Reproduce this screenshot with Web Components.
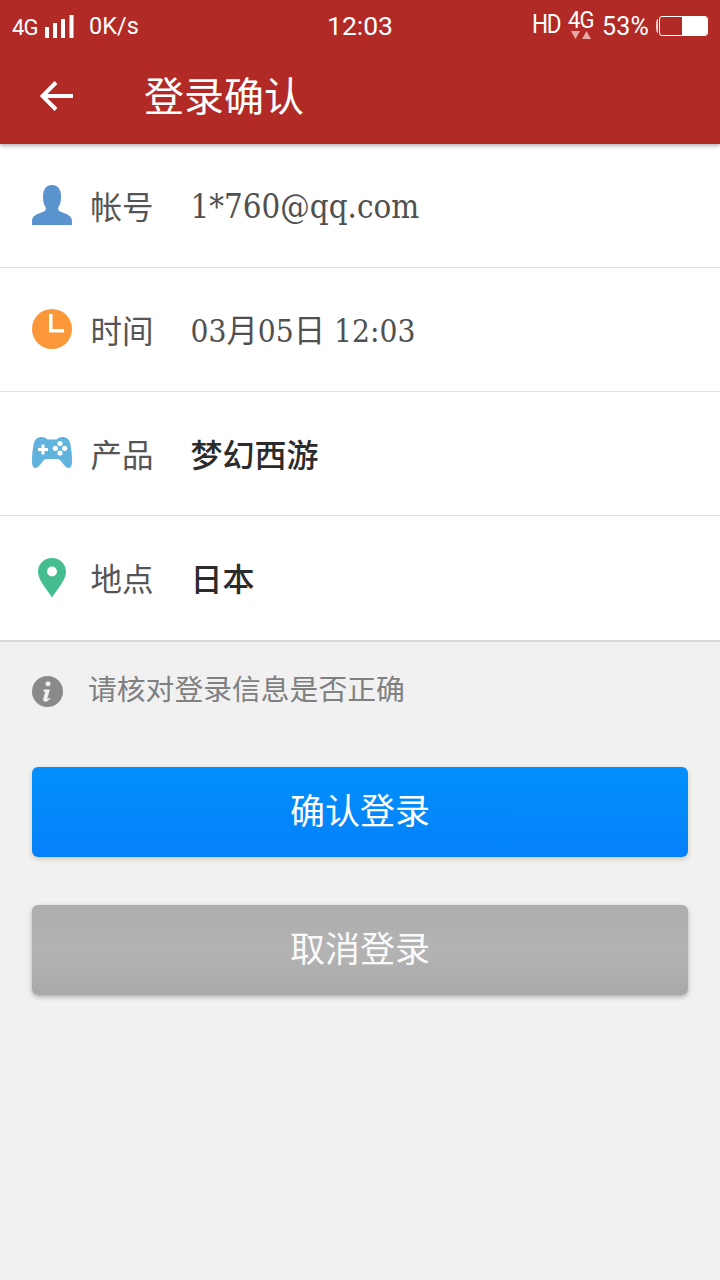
<!DOCTYPE html>
<html lang="zh"><head><meta charset="utf-8">
<style>
html,body{margin:0;padding:0;width:720px;height:1280px;overflow:hidden;background:#f1f1f1}
body{font-family:"Noto Sans CJK SC","Roboto",sans-serif}
login-app{height:1280px}
</style></head><body>
<login-app>
  <status-bar></status-bar>
  <app-bar title="登录确认"></app-bar>
  <info-list>
    <info-row label="帐号" kind="serif" size="32.8" value="1*760@qq.com">
      <svg slot="icon" width="40" height="40" viewBox="0 0 40 40"><path fill="#5b93cf" d="M0 40v-3.500C0 31.500 3.500 29.500 7.500 28.200 11 27 13.500 26 13.800 24.200 14 23 13.500 22 12.800 20.800 11.500 18.500 11 15.500 11 11.500 11 4.500 14 0 20 0s9 4.500 9 11.500c0 4-.5 7-1.800 9.300-.7 1.200-1.200 2.200-1 3.400.3 1.800 2.800 2.800 6.300 4 4 1.300 7.500 3.300 7.500 8.300V40z"/></svg>
    </info-row>
    <info-row label="时间" kind="serif" size="31.4" value="03月05日 12:03">
      <svg slot="icon" width="40" height="40" viewBox="0 0 40 40"><circle cx="20" cy="20" r="20" fill="#f99739"/><path d="M17 5h3.500v15H32v3.500H17z" fill="#fff"/></svg>
    </info-row>
    <info-row label="产品" kind="bold" value="梦幻西游">
      <svg slot="icon" width="40" height="32" viewBox="0 0 40 32"><path fill="#5fb3dc" d="M10 0C5.500 0 2.800 2 1.800 6.500.6 12 0 18 0 24c0 4 1 7 3 7 3 0 5.500-3.500 8-7 1-1.300 2-2 3.500-2h11c1.500 0 2.500.7 3.500 2 2.500 3.500 5 7 8 7 2 0 3-3 3-7 0-6-.6-12-1.800-17.500C37.200 2 34.500 0 30 0c-2.500 0-4 1-5.500 2.500h-9C14 1 12.500 0 10 0z"/><path fill="#fff" d="M9.500 7.500h3v3.500H16v3h-3.500v3.500h-3V14H6v-3h3.500z"/><circle cx="28" cy="6.500" r="2.600" fill="#fff"/><circle cx="28" cy="16" r="2.600" fill="#fff"/><circle cx="23.300" cy="11.300" r="2.600" fill="#fff"/><circle cx="32.700" cy="11.300" r="2.600" fill="#fff"/></svg>
    </info-row>
    <info-row label="地点" kind="bold" value="日本" last>
      <svg slot="icon" width="28" height="40" viewBox="0 0 28 40"><path fill-rule="evenodd" fill="#45bd8f" d="M14 0C6.200 0 0 6 0 13.800 0 22 8.500 31 14 39.500 19.500 31 28 22 28 13.800 28 6 21.800 0 14 0zm0 8.500a5 5 0 1 1 0 10 5 5 0 0 1 0-10z"/></svg>
    </info-row>
  </info-list>
  <hint-line text="请核对登录信息是否正确"></hint-line>
  <action-button tone="blue" label="确认登录"></action-button>
  <action-button tone="gray" label="取消登录"></action-button>
</login-app>
<script>
function def(name, html){
  customElements.define(name, class extends HTMLElement{
    connectedCallback(){
      if(this.shadowRoot) return;
      const r=this.attachShadow({mode:'open'});
      r.innerHTML=typeof html==='function'?html(this):html;
    }
  });
}
def('login-app',`<style>:host{display:flex;flex-direction:column;width:720px;background:#f1f1f1}</style><slot></slot>`);
def('status-bar',`<style>
:host{display:flex;align-items:center;height:52px;background:#b22a26;color:#fff;font-family:"Roboto",sans-serif;position:relative;box-sizing:border-box;padding:0 12px}
.l{display:flex;align-items:center;width:300px;height:52px}
.net{font-size:22px;letter-spacing:-.8px;margin-top:3px;width:33px;white-space:nowrap}
.speed{font-size:23.500px;margin-left:15px;margin-top:-1px;white-space:nowrap}
.time{position:absolute;left:0;right:0;top:9px;text-align:center;font-size:26.500px;line-height:34px}
.r{display:flex;align-items:center;margin-left:auto;height:52px}
.hd{font-size:25px;letter-spacing:-1.500px;line-height:30px;margin-top:-3px;margin-left:-2px;transform:scaleX(.9);transform-origin:left;width:36px}
.g{display:flex;flex-direction:column;align-items:center;width:26px;margin-top:-2px}
.g b{font-weight:400;font-size:24px;line-height:21px;letter-spacing:-1px;transform:scaleX(.92)}
.g svg{display:block;margin-top:-1px}
.pct{font-size:25px;margin-left:8px;letter-spacing:.2px;white-space:nowrap}
.arc{width:3px;height:14px;margin-left:7px;border-left:2px solid rgba(255,255,255,.8);border-radius:50%;box-sizing:border-box}
.bat{margin-left:0;width:47px;height:18px;border:1px solid #fff;border-radius:3px;display:flex;justify-content:flex-end;background:transparent}
.bat i{display:block;width:25px;background:#fff;border-radius:0 2px 2px 0}
</style>
<div class="l"><span class="net">4G</span>
<svg width="29" height="23" viewBox="0 0 29 23"><path fill="#fff" d="M0 12h4v11H0zM8 8h4v15H8zM16 4h4v19h-4zM24.500 0h4v23h-4z"/></svg>
<span class="speed">0K/s</span></div>
<div class="time">12:03</div>
<div class="r"><span class="hd">HD</span><span class="g"><b>4G</b><svg width="24" height="10" viewBox="0 0 24 10"><path fill="#e8a9a6" d="M2 1h9L6.500 9zM13 9l4.500-8L22 9z"/></svg></span><span class="pct">53%</span><span class="arc"></span><span class="bat"><i></i></span></div>`);
def('app-bar',h=>`<style>
:host{display:flex;align-items:center;height:92px;background:#b22a26;color:#fff;box-shadow:0 2px 4px rgba(0,0,0,.3);position:relative;z-index:2;box-sizing:border-box;padding:0 0 8px 40px}
svg{flex:none;margin-top:4px}
span{font-size:40px;line-height:52px;margin-left:71px;white-space:nowrap}
</style><svg width="33" height="32" viewBox="0 0 33 32"><path d="M16 2.500 2.500 16 16 29.500M3 16h30" fill="none" stroke="#fff" stroke-width="4"/></svg><span>${h.getAttribute('title')}</span>`);
def('info-list',`<style>:host{display:block;background:#fff;border-bottom:2px solid #d8d8d8}</style><slot></slot>`);
def('info-row',h=>{
  const bold=h.getAttribute('kind')==='bold';
  return `<style>
:host{display:flex;align-items:center;height:124px;box-sizing:border-box;padding-left:32px;${h.hasAttribute('last')?'':'border-bottom:1px solid #e2e2e2;'}color:#555}
.i{width:40px;height:40px;display:flex;align-items:center;justify-content:center;flex:none;margin-top:-1px}
.lb{font-size:31.500px;margin-left:18.500px;width:100px;white-space:nowrap;color:#555;line-height:40px;margin-top:-2px}
.v{white-space:nowrap;line-height:44px;${bold?'font-size:32px;font-weight:500;color:#2b2b2b;margin-top:-2px':`font-family:"DejaVu Serif Condensed","Noto Sans CJK SC",serif;font-size:${h.getAttribute('size')}px;color:#505050;margin-top:3px`}}
</style><div class="i"><slot name="icon"></slot></div><div class="lb">${h.getAttribute('label')}</div><div class="v">${h.getAttribute('value')}</div>`;
});
def('hint-line',h=>`<style>
:host{display:flex;align-items:center;height:125px;box-sizing:border-box;padding:0 0 29px 32px;color:#808080}
span{font-size:28.800px;margin-left:25px;white-space:nowrap;line-height:40px;margin-top:-4px}
svg{flex:none;margin-top:2px}
</style><svg width="31" height="31" viewBox="0 0 32 32"><circle cx="16" cy="16" r="16" fill="#8a8a8a"/><path fill="#f0f0f0" d="M16.500 5.500a2.600 2.600 0 1 1 0 5.200 2.600 2.600 0 0 1 0-5.200zM12 14h6.500l-2.600 9c-.2.800.4 1 1 .6l1.600-1.300.6.700c-1.500 2-3.200 3.500-5.300 3.500-1.900 0-2.600-1.200-2.100-3L13.500 16.500l-1.700-.7z"/></svg><span>${h.getAttribute('text')}</span>`);
def('action-button',h=>{
  const blue=h.getAttribute('tone')==='blue';
  return `<style>
:host{display:block;margin:0 32px ${blue?48:0}px;height:90px}
button{display:block;width:100%;height:100%;border:0;padding:0 0 7px;border-radius:6px;font:inherit;font-size:35px;color:${blue?'#fff':'#fafafa'};
background:${blue?'linear-gradient(#0290fb,#0580fa)':'linear-gradient(#adadad,#b3b3b3 50%,#a9a9a9)'};
box-shadow:0 2px 5px ${blue?'rgba(150,120,70,.35)':'rgba(0,0,0,.28)'}}
</style><button type="button">${h.getAttribute('label')}</button>`;
});
</script>
</body></html>
